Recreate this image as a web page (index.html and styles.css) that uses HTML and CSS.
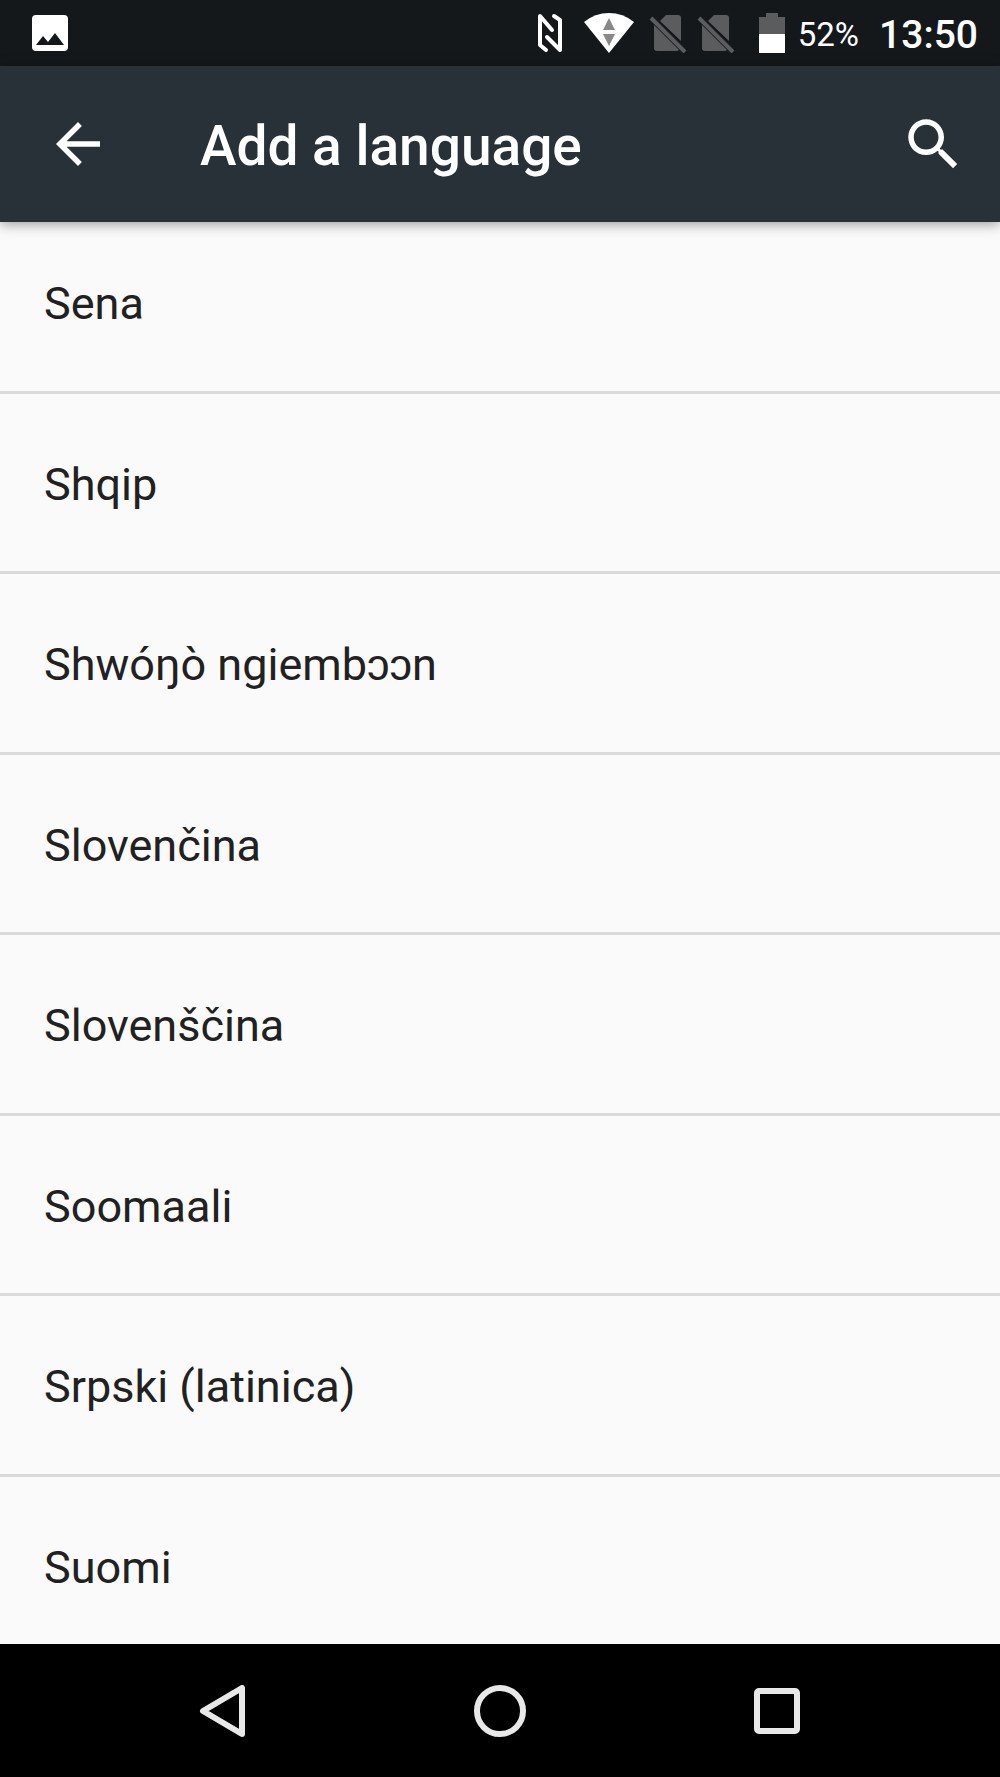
FILE: index.html
```html
<!DOCTYPE html>
<html lang="en">
<head>
    <meta charset="UTF-8">
    <meta name="viewport" content="width=device-width, initial-scale=1.0">
    <title>Add a language</title>
    <link rel="stylesheet" href="styles.css">
</head>
<body>
    <div class="status-bar">
        <svg class="notification" width="36" height="36" viewBox="0 0 36 36">
            <rect width="36" height="36" rx="4" fill="#fff"/>
            <path d="M4 30L11 21L16 27L23 18L32 30Z" fill="#14181b"/>
        </svg>
        <div class="status-icons">
            <svg class="nfc" width="26" height="40" viewBox="0 0 26 40">
                <path d="M15 17L3 3V32L9 37M17 3L23 7V37L10 24" fill="none" stroke="#fff" stroke-width="4" stroke-linecap="round" stroke-linejoin="round"/>
            </svg>
            <svg class="wifi" width="50" height="40" viewBox="0 0 50 40">
                <path d="M0 9Q11 0 25 0Q39 0 50 9L25 40Z" fill="#fff"/>
                <path d="M19 17L25 5L31 17ZM19 21H31L25 33Z" fill="#888"/>
            </svg>
            <svg class="sim" width="38" height="40" viewBox="0 0 38 40">
                <path d="M11 8L17 2H29Q32 2 32 5V28ZM5 12L30 37Q29 38 28 38H8Q5 38 5 35Z" fill="#5a5c5e"/>
                <path d="M2 5L36 39" stroke="#5a5c5e" stroke-width="4"/>
            </svg>
            <svg class="sim" width="38" height="40" viewBox="0 0 38 40">
                <path d="M11 8L17 2H29Q32 2 32 5V28ZM5 12L30 37Q29 38 28 38H8Q5 38 5 35Z" fill="#5a5c5e"/>
                <path d="M2 5L36 39" stroke="#5a5c5e" stroke-width="4"/>
            </svg>
            <svg class="battery" width="26" height="40" viewBox="0 0 26 40">
                <path d="M7 0H19V4H26V21H0V4H7Z" fill="#5a5c5e"/>
                <path d="M0 21H26V40H0Z" fill="#fff"/>
            </svg>
            <span class="percent">52%</span>
            <span class="time">13:50</span>
        </div>
    </div>

    <header class="app-bar">
        <button class="icon-button" aria-label="Back">
            <svg width="66" height="66" viewBox="0 0 24 24" fill="#fff">
                <path d="M20 11H7.83l5.59-5.59L12 4l-8 8 8 8 1.41-1.41L7.83 13H20v-2z"/>
            </svg>
        </button>
        <h1>Add a language</h1>
        <button class="icon-button" aria-label="Search">
            <svg width="66" height="66" viewBox="0 0 24 24" fill="#fff">
                <path d="M15.5 14h-.79l-.28-.27C15.41 12.59 16 11.11 16 9.5 16 5.91 13.09 3 9.5 3S3 5.91 3 9.5 5.91 16 9.5 16c1.61 0 3.09-.59 4.23-1.57l.27.28v.79l5.3 5.29L20.79 19.3l-5.29-5.3zm-6 0C7.01 14 5 11.99 5 9.5S7.01 5 9.5 5 14 7.01 14 9.5 11.99 14 9.5 14z"/>
            </svg>
        </button>
    </header>

    <main class="content">
        <ul class="language-list">
            <li><button>Sena</button></li>
            <li><button>Shqip</button></li>
            <li><button>Shwóŋò ngiembɔɔn</button></li>
            <li><button>Slovenčina</button></li>
            <li><button>Slovenščina</button></li>
            <li><button>Soomaali</button></li>
            <li><button>Srpski (latinica)</button></li>
            <li><button>Suomi</button></li>
        </ul>
    </main>

    <nav class="nav-bar">
        <button aria-label="Back">
            <svg width="52" height="52" viewBox="0 0 52 52">
                <path d="M45 3V49L6 26Z"/>
            </svg>
        </button>
        <button aria-label="Home">
            <svg width="52" height="52" viewBox="0 0 52 52">
                <circle cx="26" cy="26" r="23"/>
            </svg>
        </button>
        <button aria-label="Recent apps">
            <svg width="52" height="52" viewBox="0 0 52 52">
                <rect x="6" y="6" width="40" height="40" rx="2"/>
            </svg>
        </button>
    </nav>
</body>
</html>
```
FILE: styles.css
```css
* {
    box-sizing: border-box;
}

body {
    margin: 0;
    min-height: 100vh;
    display: flex;
    flex-direction: column;
    font-family: Roboto, sans-serif;
    background-color: #fafafa;
    color: #212121;
}

button {
    padding: 0;
    border: none;
    background: none;
    font: inherit;
    color: inherit;
    cursor: pointer;
}

svg {
    display: block;
}

.status-bar {
    display: flex;
    justify-content: space-between;
    align-items: center;
    height: 66px;
    padding: 0 22px 0 32px;
    background-color: #14181b;
    color: #fff;
}

.status-icons {
    display: flex;
    align-items: center;
}

.nfc {
    margin-right: 21px;
}

.wifi {
    margin-right: 15px;
}

.sim {
    margin-right: 10px;
}

.battery {
    margin-left: 14px;
    margin-right: 13px;
}

.percent,
.time {
    padding-top: 4px;
    line-height: 40px;
}

.percent {
    font-size: 33px;
    margin-right: 20px;
}

.time {
    font-size: 39px;
    font-weight: 500;
}

.app-bar {
    position: relative;
    z-index: 1;
    display: flex;
    align-items: center;
    height: 156px;
    padding: 0 34px 0 45px;
    background-color: #283137;
    color: #fff;
    box-shadow: 0 2px 12px rgba(0, 0, 0, 0.4);
}

.app-bar h1 {
    flex: 1;
    margin: 0 0 0 89px;
    padding-top: 4px;
    font-size: 55px;
    line-height: 64px;
    font-weight: 500;
}

.content {
    flex: 1;
    display: flex;
    overflow: hidden;
}

/* list is part-way scrolled, so both ends run under the bars */
.language-list {
    flex: 1;
    display: grid;
    grid-auto-rows: 1fr;
    margin: -9px 0 -13px;
    padding: 0;
    list-style: none;
}

.language-list li {
    display: flex;
    border-bottom: 3px solid #dadada;
}

.language-list button {
    flex: 1;
    min-height: 160px;
    padding: 5px 44px 0;
    font-size: 45px;
    line-height: 52px;
    text-align: left;
}

.nav-bar {
    display: grid;
    grid-template-columns: repeat(3, 1fr);
    height: 133px;
    padding: 0 84px;
    background-color: #000;
}

.nav-bar button {
    display: flex;
    justify-content: center;
    align-items: center;
}

.nav-bar svg {
    fill: none;
    stroke: #e8e8e8;
    stroke-width: 6;
    stroke-linejoin: round;
}
```
